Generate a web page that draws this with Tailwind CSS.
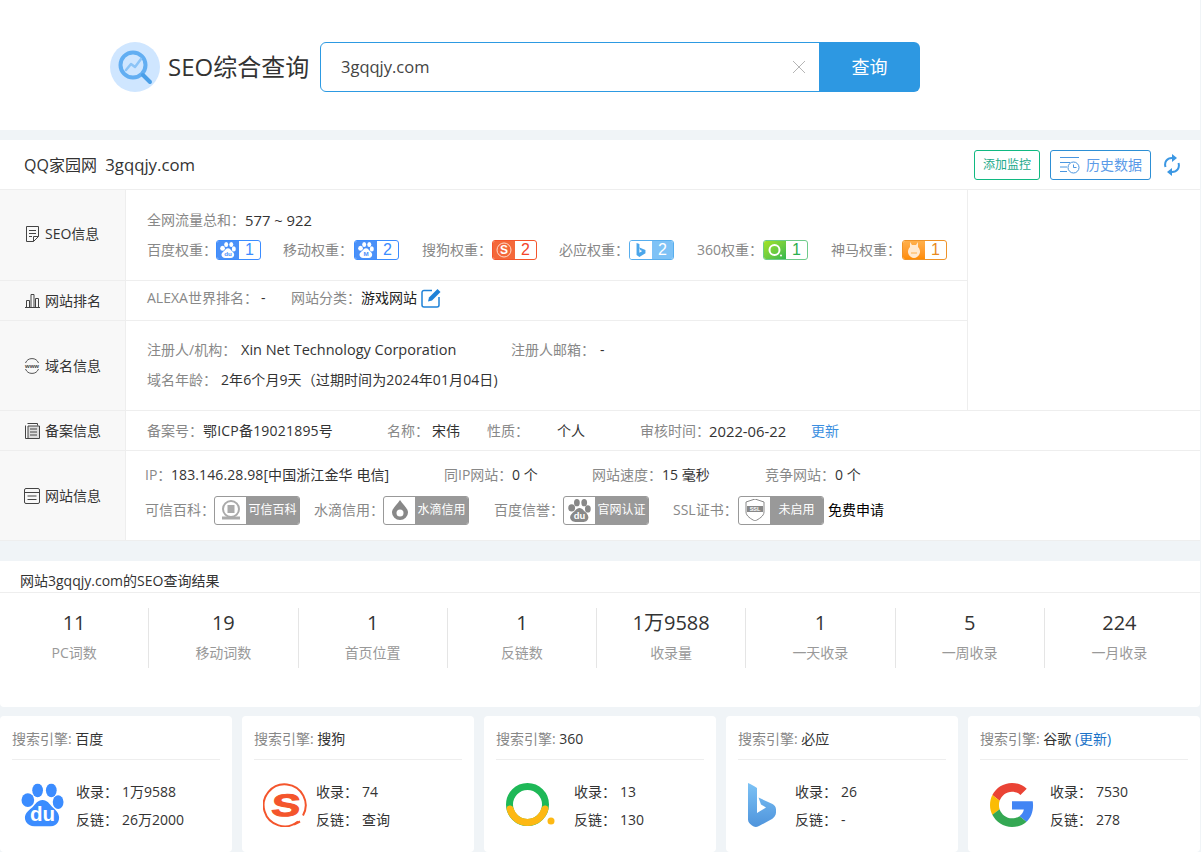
<!DOCTYPE html>
<html lang="zh-CN">
<head>
<meta charset="UTF-8">
<title>SEO综合查询</title>
<script src="https://cdn.jsdelivr.net/npm/@tailwindcss/browser@4"></script>
</head>
<body class="bg-[#f0f4f7] text-[#333] text-[14px] leading-[20px] whitespace-nowrap font-['Open_Sans','Noto_Sans_CJK_SC',sans-serif] h-[852px] overflow-hidden">

<svg class="hidden">
  <symbol id="paw" viewBox="0 0 44 44">
    <ellipse cx="7" cy="17" rx="6.500" ry="7"/>
    <ellipse cx="17" cy="7" rx="5.500" ry="7"/>
    <ellipse cx="31" cy="7" rx="5.500" ry="7"/>
    <ellipse cx="38" cy="19" rx="5.500" ry="7"/>
    <path d="M22 17c5 0 7 4 10 7 3 2.500 7 6 7 11 0 5-4 9-9 9H14c-5 0-10-4-10-9 0-5 5-8.500 8-11 3-3 5-7 10-7z"/>
  </symbol>
</svg>

<!-- search header -->
<header class="h-[130px] bg-white flex items-start pl-[110px] pt-[42px] mr-px">
  <svg class="w-[50px] h-[50px] shrink-0" viewBox="0 0 50 50">
    <circle cx="25" cy="25" r="25" fill="#cfe6ff"/>
    <circle cx="23" cy="23" r="12.500" fill="none" stroke="#62aef2" stroke-width="4"/>
    <path d="M33 33l7 7" stroke="#4a9fe8" stroke-width="4" stroke-linecap="round"/>
    <path d="M16 28l5-6 4 3 6-8" fill="none" stroke="#8cc4f7" stroke-width="2.500" stroke-linecap="round" stroke-linejoin="round"/>
  </svg>
  <div class="w-[160px] shrink-0 pl-[8px] h-[50px] leading-[50px] text-[24px] text-[#333]">SEO综合查询</div>
  <div class="w-[500px] shrink-0 h-[50px] border border-[#2d9ae2] rounded-l-[6px] flex items-center pl-[20px] pr-[13px] justify-between">
    <span class="text-[16.500px] text-[#444]">3gqqjy.com</span>
    <svg class="w-[14px] h-[14px]" viewBox="0 0 14 14"><path d="M1 1l12 12M13 1L1 13" stroke="#b5b5b5" stroke-width="1"/></svg>
  </div>
  <button class="w-[101px] shrink-0 h-[50px] -ml-px bg-[#2d98e2] rounded-r-[6px] text-white text-[18px]">查询</button>
</header>

<!-- site info -->
<section class="mt-[10px] bg-white mr-px">
  <div class="h-[50px] border-b border-[#eeeeee] flex items-center pl-[24px] pr-[20px]">
    <span class="text-[16px] text-[#333] whitespace-pre">QQ家园网  <span class="text-[16.750px]">3gqqjy.com</span></span>
    <div class="ml-auto flex items-center">
      <a class="w-[66px] h-[30px] border border-[#10b981] rounded-[3px] flex items-center justify-center text-[12px] text-[#1ca98a]">添加监控</a>
      <a class="ml-[10px] w-[101px] h-[30px] border border-[#2d8fd5] rounded-[3px] flex items-center justify-center gap-[6px] text-[14px] text-[#5b9be8]">
        <svg class="w-[21px] h-[18px]" viewBox="0 0 21 18" fill="none" stroke="#4a96e0"><path d="M1 1.500h19M1 6.500h10M1 11h7M1 15.500h7"/><circle cx="14.500" cy="11.500" r="5.500"/><path d="M14.500 8.500v3h3"/></svg>
        历史数据
      </a>
      <svg class="ml-[13px] w-[16px] h-[22px]" viewBox="0 0 16 22" fill="none" stroke="#3b97e3" stroke-width="2"><path d="M1.500 13C0 8 3 4 8 4"/><path d="M14.500 9C16 14 13 18 8 18"/><path d="M8 0l5 4-5 4z" fill="#3b97e3" stroke="none"/><path d="M8 14l-5 4 5 4z" fill="#3b97e3" stroke="none"/></svg>
    </div>
  </div>

  <div class="w-[968px] border-r border-[#eeeeee]">
    <!-- SEO信息 -->
    <div class="h-[91px] flex border-b border-[#eeeeee]">
      <div class="w-[126px] shrink-0 bg-[#f8f8f8] border-r border-[#eeeeee] flex items-center pl-[25px] pb-[2px] gap-[5px]">
        <svg class="w-[15px] h-[16px]" viewBox="0 0 15 16" fill="none" stroke="#444"><path d="M1.500.5h12v10l-5 5h-7z"/><path d="M4 4.500h7M4 7.500h7M4 10.500h3M13.500 10.500h-5v5"/></svg>
        <span>SEO信息</span>
      </div>
      <div class="flex-1 flex flex-col justify-center pl-[21px]">
        <div class="h-[30px] flex items-center"><span class="text-[#888]">全网流量总和：</span><span class="text-[14.800px]">577 ~ 922</span></div>
        <div class="h-[30px] flex items-center">
          <span class="w-[69px] text-[#888]">百度权重：</span>
          <span class="w-[45px] h-[20px] flex rounded-[3px] border border-[#3b8cff] overflow-hidden">
            <span class="w-[22px] bg-[#4a90f8] flex items-center justify-center"><svg class="w-[16px] h-[16px] fill-white" viewBox="0 0 44 44"><use href="#paw"/><text x="22" y="38" text-anchor="middle" font-size="17" font-weight="700" font-family="Liberation Sans" fill="#4a90f8">du</text></svg></span>
            <span class="flex-1 flex items-center justify-center text-[16px] text-[#3b8cff] font-['Liberation_Sans',sans-serif]">1</span>
          </span>
          <span class="ml-[22px] w-[71px] text-[#888]">移动权重：</span>
          <span class="w-[45px] h-[20px] flex rounded-[3px] border border-[#3b8cff] overflow-hidden">
            <span class="w-[22px] bg-[#4a90f8] flex items-center justify-center"><svg class="w-[16px] h-[16px] fill-white" viewBox="0 0 44 44"><use href="#paw"/><text x="22" y="39" text-anchor="middle" font-size="17" font-weight="700" font-family="Liberation Sans" fill="#4a90f8">M</text></svg></span>
            <span class="flex-1 flex items-center justify-center text-[16px] text-[#3b8cff] font-['Liberation_Sans',sans-serif]">2</span>
          </span>
          <span class="ml-[23px] w-[70px] text-[#888]">搜狗权重：</span>
          <span class="w-[45px] h-[20px] flex rounded-[3px] border border-[#f4552c] overflow-hidden">
            <span class="w-[22px] bg-[#f4683a] flex items-center justify-center">
              <svg class="w-[16px] h-[16px]" viewBox="0 0 16 16"><circle cx="8" cy="8" r="7" fill="none" stroke="#ffd9c9"/><text x="8" y="12" text-anchor="middle" font-size="12" font-weight="700" font-family="Liberation Sans" fill="#fff">S</text></svg>
            </span>
            <span class="flex-1 flex items-center justify-center text-[16px] text-[#f4442a] font-['Liberation_Sans',sans-serif]">2</span>
          </span>
          <span class="ml-[22px] w-[70px] text-[#888]">必应权重：</span>
          <span class="w-[45px] h-[20px] flex rounded-[3px] border border-[#58aeee] overflow-hidden">
            <span class="w-[22px] bg-white flex items-center justify-center">
              <svg class="w-[10px] h-[14px]" viewBox="0 0 28 44"><path d="M0 0l9 3.500v27l9-5-6-3-3-8 19 7.500v10L9 44l-9-6z" fill="#4ba6ea"/></svg>
            </span>
            <span class="flex-1 bg-[#7ec2f6] flex items-center justify-center text-[16px] text-white font-['Liberation_Sans',sans-serif]">2</span>
          </span>
          <span class="ml-[23px] w-[66px] text-[#888]">360权重：</span>
          <span class="w-[45px] h-[20px] flex rounded-[3px] border border-[#6fcb8b] overflow-hidden">
            <span class="w-[22px] bg-gradient-to-br from-[#a2e31f] to-[#2cb84e] flex items-center justify-center">
              <svg class="w-[16px] h-[16px]" viewBox="0 0 16 16"><circle cx="7.500" cy="8" r="5" fill="none" stroke="#fff" stroke-width="2"/><circle cx="14" cy="13.500" r="1" fill="#fff"/></svg>
            </span>
            <span class="flex-1 flex items-center justify-center text-[16px] text-[#2cb050] font-['Liberation_Sans',sans-serif]">1</span>
          </span>
          <span class="ml-[23px] w-[71px] text-[#888]">神马权重：</span>
          <span class="w-[45px] h-[20px] flex rounded-[3px] border border-[#ee932a] overflow-hidden">
            <span class="w-[22px] bg-gradient-to-b from-[#ffb04a] to-[#ff8c00] flex items-center justify-center">
              <svg class="w-[12px] h-[16px]" viewBox="0 0 12 16"><path d="M2 0l2 3h4l2-3v5c2 2 2 4 2 5 0 3-3 6-6 6s-6-3-6-6c0-1 0-3 2-5z" fill="#ffe9cf"/><path d="M3 11h6" stroke="#ffb04a"/></svg>
            </span>
            <span class="flex-1 flex items-center justify-center text-[16px] text-[#e98a1d] font-['Liberation_Sans',sans-serif]">1</span>
          </span>
        </div>
      </div>
    </div>

    <!-- 网站排名 -->
    <div class="h-[40px] flex border-b border-[#eeeeee]">
      <div class="w-[126px] shrink-0 bg-[#f8f8f8] border-r border-[#eeeeee] flex items-center pl-[25px] gap-[5px]">
        <svg class="w-[15px] h-[15px]" viewBox="0 0 15 15" fill="none" stroke="#444"><path d="M0 14.500h15M1.500 14V7.500h3V14M6 14V1.500h3V14M10.500 14V5.500h3V14"/></svg>
        <span>网站排名</span>
      </div>
      <div class="flex-1 flex items-center pl-[21px] pb-[5px]">
        <span class="w-[114px] text-[#888]">ALEXA世界排名：</span><span class="w-[30px]">-</span>
        <span class="w-[70px] text-[#888]">网站分类：</span><span class="text-[#222]">游戏网站</span>
        <svg class="ml-[4px] w-[21px] h-[20px]" viewBox="0 0 21 20" fill="none"><path d="M11 2.500H3A2 2 0 0 0 1 4.500V17a2 2 0 0 0 2 2h13a2 2 0 0 0 2-2v-8" stroke="#1f82d8" stroke-width="1.500"/><path d="M7 13.500l1-4L16.500 1l3 3L11 12.500z" fill="#1f82d8"/></svg>
      </div>
    </div>

    <!-- 域名信息 -->
    <div class="h-[89px] flex">
      <div class="w-[126px] shrink-0 bg-[#f8f8f8] border-r border-[#eeeeee] flex items-center pl-[24px] gap-[5px]">
        <svg class="w-[16px] h-[16px]" viewBox="0 0 16 16" fill="none" stroke="#555"><path d="M1.500 5a7 7 0 0 1 13 0M1.500 11a7 7 0 0 0 13 0"/><text x="8" y="10" text-anchor="middle" font-size="6" font-weight="700" font-family="Liberation Sans" fill="#444" stroke="none">www</text></svg>
        <span>域名信息</span>
      </div>
      <div class="flex-1 flex flex-col justify-center pl-[21px] pb-[1px]">
        <div class="h-[30px] flex items-center">
          <span class="w-[94px] text-[#888]">注册人/机构：</span><span class="w-[270px] text-[14.500px]">Xin Net Technology Corporation</span>
          <span class="w-[89px] text-[#888]">注册人邮箱：</span><span>-</span>
        </div>
        <div class="h-[30px] flex items-center">
          <span class="w-[74px] text-[#888]">域名年龄：</span><span class="tracking-[0.1px]">2年6个月9天（过期时间为2024年01月04日)</span>
        </div>
      </div>
    </div>
  </div>

  <!-- 备案信息 -->
  <div class="h-[41px] flex border-y border-[#eeeeee]">
    <div class="w-[126px] shrink-0 bg-[#f8f8f8] border-r border-[#eeeeee] flex items-center pl-[25px] gap-[5px]">
      <svg class="w-[15px] h-[16px]" viewBox="0 0 15 16" fill="none" stroke="#444"><path d="M2.500.5h10v2M.5 2.500v13h11"/><path d="M3 3h11.500v12.500H3z" fill="#ddd"/><path d="M5 6h7M5 9h7M5 12h7"/></svg>
      <span>备案信息</span>
    </div>
    <div class="flex-1 flex items-center pl-[21px]">
      <span class="w-[56px] text-[#888]">备案号：</span><span class="w-[184px] tracking-[0.2px]">鄂ICP备19021895号</span>
      <span class="w-[45px] text-[#888]">名称：</span><span class="w-[55px]">宋伟</span>
      <span class="w-[70px] text-[#888]">性质：</span><span class="w-[83px]">个人</span>
      <span class="w-[69px] text-[#888]">审核时间：</span><span class="w-[102px] text-[14.800px]">2022-06-22</span>
      <span class="text-[#3b8fe0]">更新</span>
    </div>
  </div>

  <!-- 网站信息 -->
  <div class="h-[90px] flex border-b border-[#eeeeee]">
    <div class="w-[126px] shrink-0 bg-[#f8f8f8] border-r border-[#eeeeee] flex items-center pl-[24px] gap-[5px]">
      <svg class="w-[16px] h-[16px]" viewBox="0 0 16 16" fill="none" stroke="#444"><rect x=".5" y=".5" width="15" height="15" rx="1.500"/><path d="M.5 4.500h15M3.500 8h9M3.500 11.500h9"/></svg>
      <span>网站信息</span>
    </div>
    <div class="flex-1 pl-[19px] pt-[9px]">
      <div class="h-[30px] flex items-center">
        <span class="w-[26px] text-[#888]">IP：</span><span class="w-[273px] tracking-[0.1px]">183.146.28.98[中国浙江金华 电信]</span>
        <span class="w-[68px] text-[#888]">同IP网站：</span><span class="w-[80px]">0 个</span>
        <span class="w-[70px] text-[#888]">网站速度：</span><span class="w-[103px]">15 毫秒</span>
        <span class="w-[70px] text-[#888]">竞争网站：</span><span>0 个</span>
      </div>
      <div class="mt-[5px] h-[30px] flex items-center">
        <span class="w-[69px] text-[#888]">可信百科：</span>
        <span class="w-[86px] h-[29px] flex rounded-[3px] border border-[#999] overflow-hidden">
          <span class="w-[31px] flex items-center justify-center">
            <svg class="w-[24px] h-[24px]" viewBox="0 0 24 24" fill="none" stroke="#aaa" stroke-width="2"><circle cx="12" cy="11" r="8"/><rect x="8.500" y="7" width="7" height="8" fill="#aaa" stroke="none"/><path d="M3 20h18" stroke-width="3"/></svg>
          </span>
          <span class="flex-1 bg-[#999] text-white text-[12px] flex items-center justify-center">可信百科</span>
        </span>
        <span class="ml-[14px] w-[69px] text-[#888]">水滴信用：</span>
        <span class="w-[86px] h-[29px] flex rounded-[3px] border border-[#999] overflow-hidden">
          <span class="w-[31px] flex items-center justify-center">
            <svg class="w-[16px] h-[20px]" viewBox="0 0 16 20"><path d="M8 0c3 5 8 8 8 12.500a8 7.500 0 0 1-16 0C0 8 5 5 8 0z" fill="#888"/><circle cx="8" cy="13" r="3.500" fill="#fff"/></svg>
          </span>
          <span class="flex-1 bg-[#999] text-white text-[12px] flex items-center justify-center">水滴信用</span>
        </span>
        <span class="ml-[25px] w-[69px] text-[#888]">百度信誉：</span>
        <span class="w-[86px] h-[29px] flex rounded-[3px] border border-[#999] overflow-hidden">
          <span class="w-[31px] flex items-center justify-center"><svg class="w-[23px] h-[23px] fill-[#888]" viewBox="0 0 44 44"><use href="#paw"/><text x="22" y="38" text-anchor="middle" font-size="18" font-weight="700" font-family="Liberation Sans" fill="#fff">du</text></svg></span>
          <span class="flex-1 bg-[#999] text-white text-[12px] flex items-center justify-center">官网认证</span>
        </span>
        <span class="ml-[24px] w-[65px] text-[#888]">SSL证书：</span>
        <span class="w-[86px] h-[29px] flex rounded-[3px] border border-[#999] overflow-hidden">
          <span class="w-[31px] flex items-center justify-center">
            <svg class="w-[20px] h-[22px]" viewBox="0 0 20 22"><path d="M10 0l9 3v10c0 4-5 7-9 9-4-2-9-5-9-9V3z" fill="none" stroke="#888"/><path d="M2 7h16v6H2z" fill="#888"/><text x="10" y="12" text-anchor="middle" font-size="5.500" font-weight="700" font-family="Liberation Sans" fill="#fff">SSL</text></svg>
          </span>
          <span class="flex-1 bg-[#999] text-white text-[12px] flex items-center justify-center">未启用</span>
        </span>
        <span class="ml-[4px] text-black">免费申请</span>
      </div>
    </div>
  </div>
</section>

<!-- seo result -->
<section class="mt-[20px] h-[146px] bg-white mr-px rounded-b-[4px]">
  <div class="h-[32px] border-b border-[#eeeeee] pl-[20px] pt-[10px] leading-[20px] text-[#333]">网站3gqqjy.com的SEO查询结果</div>
  <div class="mt-[15px] w-[1194px] grid grid-cols-8 divide-x divide-[#e5e5e5] h-[60px] text-center">
    <div><div class="text-[20px] leading-[30px] text-[#333]">11</div><div class="mt-[3px] leading-[24px] text-[#999]">PC词数</div></div>
    <div><div class="text-[20px] leading-[30px] text-[#333]">19</div><div class="mt-[3px] leading-[24px] text-[#999]">移动词数</div></div>
    <div><div class="text-[20px] leading-[30px] text-[#333]">1</div><div class="mt-[3px] leading-[24px] text-[#999]">首页位置</div></div>
    <div><div class="text-[20px] leading-[30px] text-[#333]">1</div><div class="mt-[3px] leading-[24px] text-[#999]">反链数</div></div>
    <div><div class="text-[20px] leading-[30px] text-[#333]">1万9588</div><div class="mt-[3px] leading-[24px] text-[#999]">收录量</div></div>
    <div><div class="text-[20px] leading-[30px] text-[#333]">1</div><div class="mt-[3px] leading-[24px] text-[#999]">一天收录</div></div>
    <div><div class="text-[20px] leading-[30px] text-[#333]">5</div><div class="mt-[3px] leading-[24px] text-[#999]">一周收录</div></div>
    <div><div class="text-[20px] leading-[30px] text-[#333]">224</div><div class="mt-[3px] leading-[24px] text-[#999]">一月收录</div></div>
  </div>
</section>

<!-- engines -->
<section class="mt-[9px] grid grid-cols-5 gap-[10px] mr-px">
  <div class="bg-white rounded-[4px] h-[136px] px-[12px]">
    <div class="h-[44px] border-b border-[#eeeeee] pt-[13px]"><span class="text-[#888]">搜索引擎:</span> 百度</div>
    <div class="flex items-center mt-[18px]">
      <svg class="ml-[9px] mb-[2px] w-[43px] h-[44px] fill-[#3b8cff]" viewBox="0 0 44 44"><use href="#paw"/><text x="22" y="38" text-anchor="middle" font-size="21" font-weight="700" font-family="Liberation Sans" fill="#fff">du</text></svg>
      <div class="ml-[12px]">
        <div class="h-[28px] flex items-center"><span class="w-[46px]">收录：</span>1万9588</div>
        <div class="h-[28px] flex items-center"><span class="w-[46px]">反链：</span>26万2000</div>
      </div>
    </div>
  </div>
  <div class="bg-white rounded-[4px] h-[136px] px-[12px]">
    <div class="h-[44px] border-b border-[#eeeeee] pt-[13px]"><span class="text-[#888]">搜索引擎:</span> 搜狗</div>
    <div class="flex items-center mt-[18px]">
      <svg class="ml-[9px] mb-[2px] w-[44px] h-[44px]" viewBox="0 0 44 44"><path d="M35 38.500A21 21 0 1 1 40 32.500" fill="none" stroke="#f4552c" stroke-width="2"/><path d="M31 41.500l6-3" stroke="#f4552c" stroke-width="2"/><text transform="translate(22 33) skewX(-6) scale(1.400 1)" text-anchor="middle" font-size="31" font-weight="700" font-family="Liberation Sans" fill="#f4552c" stroke="#f4552c" stroke-width="1">S</text></svg>
      <div class="ml-[9px]">
        <div class="h-[28px] flex items-center"><span class="w-[46px]">收录：</span>74</div>
        <div class="h-[28px] flex items-center"><span class="w-[46px]">反链：</span>查询</div>
      </div>
    </div>
  </div>
  <div class="bg-white rounded-[4px] h-[136px] px-[12px]">
    <div class="h-[44px] border-b border-[#eeeeee] pt-[13px]"><span class="text-[#888]">搜索引擎:</span> 360</div>
    <div class="flex items-center mt-[18px]">
      <svg class="ml-[10px] mb-[2px] w-[49px] h-[44px]" viewBox="0 0 49 44" fill="none"><circle cx="21.500" cy="21.500" r="18" stroke="#1eb857" stroke-width="7"/><path d="M4.100 26A18 18 0 0 0 38.900 26" stroke="#fdb813" stroke-width="7" stroke-linecap="round"/><circle cx="45" cy="38" r="3.500" fill="#fdb813"/></svg>
      <div class="ml-[19px]">
        <div class="h-[28px] flex items-center"><span class="w-[46px]">收录：</span>13</div>
        <div class="h-[28px] flex items-center"><span class="w-[46px]">反链：</span>130</div>
      </div>
    </div>
  </div>
  <div class="bg-white rounded-[4px] h-[136px] px-[12px]">
    <div class="h-[44px] border-b border-[#eeeeee] pt-[13px]"><span class="text-[#888]">搜索引擎:</span> 必应</div>
    <div class="flex items-center mt-[18px]">
      <svg class="ml-[10px] mb-[2px] w-[28px] h-[44px]" viewBox="0 0 28 44"><defs><linearGradient id="bing" x1="0" y1="0" x2="0" y2="1"><stop offset="0" stop-color="#7cc2f5"/><stop offset="1" stop-color="#4f94dc"/></linearGradient></defs><path d="M0 0c3 1 6 3 9 5v25l9-5.500-5-3-2.500-7 14 6.500c2 1 3.500 3 3.500 5.500v3c0 3-2 5-4 6.500L11 43c-3 1.500-5 1-7-.500-2-1.500-4-3-4-6z" fill="url(#bing)"/></svg>
      <div class="ml-[19px]">
        <div class="h-[28px] flex items-center"><span class="w-[46px]">收录：</span>26</div>
        <div class="h-[28px] flex items-center"><span class="w-[46px]">反链：</span>-</div>
      </div>
    </div>
  </div>
  <div class="bg-white rounded-[4px] h-[136px] px-[12px]">
    <div class="h-[44px] border-b border-[#eeeeee] pt-[13px]"><span class="text-[#888]">搜索引擎:</span> 谷歌 <span class="text-[#1a73c8]">(更新)</span></div>
    <div class="flex items-center mt-[18px]">
      <svg class="ml-[10px] mb-[2px] w-[44px] h-[44px]" viewBox="0 0 48 48">
        <path fill="#EA4335" d="M24 9.500c3.540 0 6.710 1.220 9.210 3.600l6.850-6.850C35.900 2.380 30.470 0 24 0 14.620 0 6.510 5.380 2.560 13.220l7.980 6.190C12.430 13.720 17.740 9.500 24 9.500z"/>
        <path fill="#4285F4" d="M46.980 24.550c0-1.570-.15-3.090-.38-4.550H24v9.020h12.940c-.58 2.960-2.260 5.480-4.780 7.180l7.730 6c4.510-4.180 7.090-10.360 7.090-17.650z"/>
        <path fill="#FBBC05" d="M10.530 28.590c-.48-1.450-.76-2.990-.76-4.590s.27-3.140.76-4.590l-7.980-6.190C.92 16.460 0 20.120 0 24c0 3.880.92 7.540 2.560 10.780l7.970-6.190z"/>
        <path fill="#34A853" d="M24 48c6.480 0 11.930-2.130 15.890-5.810l-7.730-6c-2.150 1.450-4.920 2.300-8.160 2.300-6.260 0-11.570-4.220-13.470-9.910l-7.980 6.190C6.510 42.620 14.620 48 24 48z"/>
      </svg>
      <div class="ml-[16px]">
        <div class="h-[28px] flex items-center"><span class="w-[46px]">收录：</span>7530</div>
        <div class="h-[28px] flex items-center"><span class="w-[46px]">反链：</span>278</div>
      </div>
    </div>
  </div>
</section>

</body>
</html>
